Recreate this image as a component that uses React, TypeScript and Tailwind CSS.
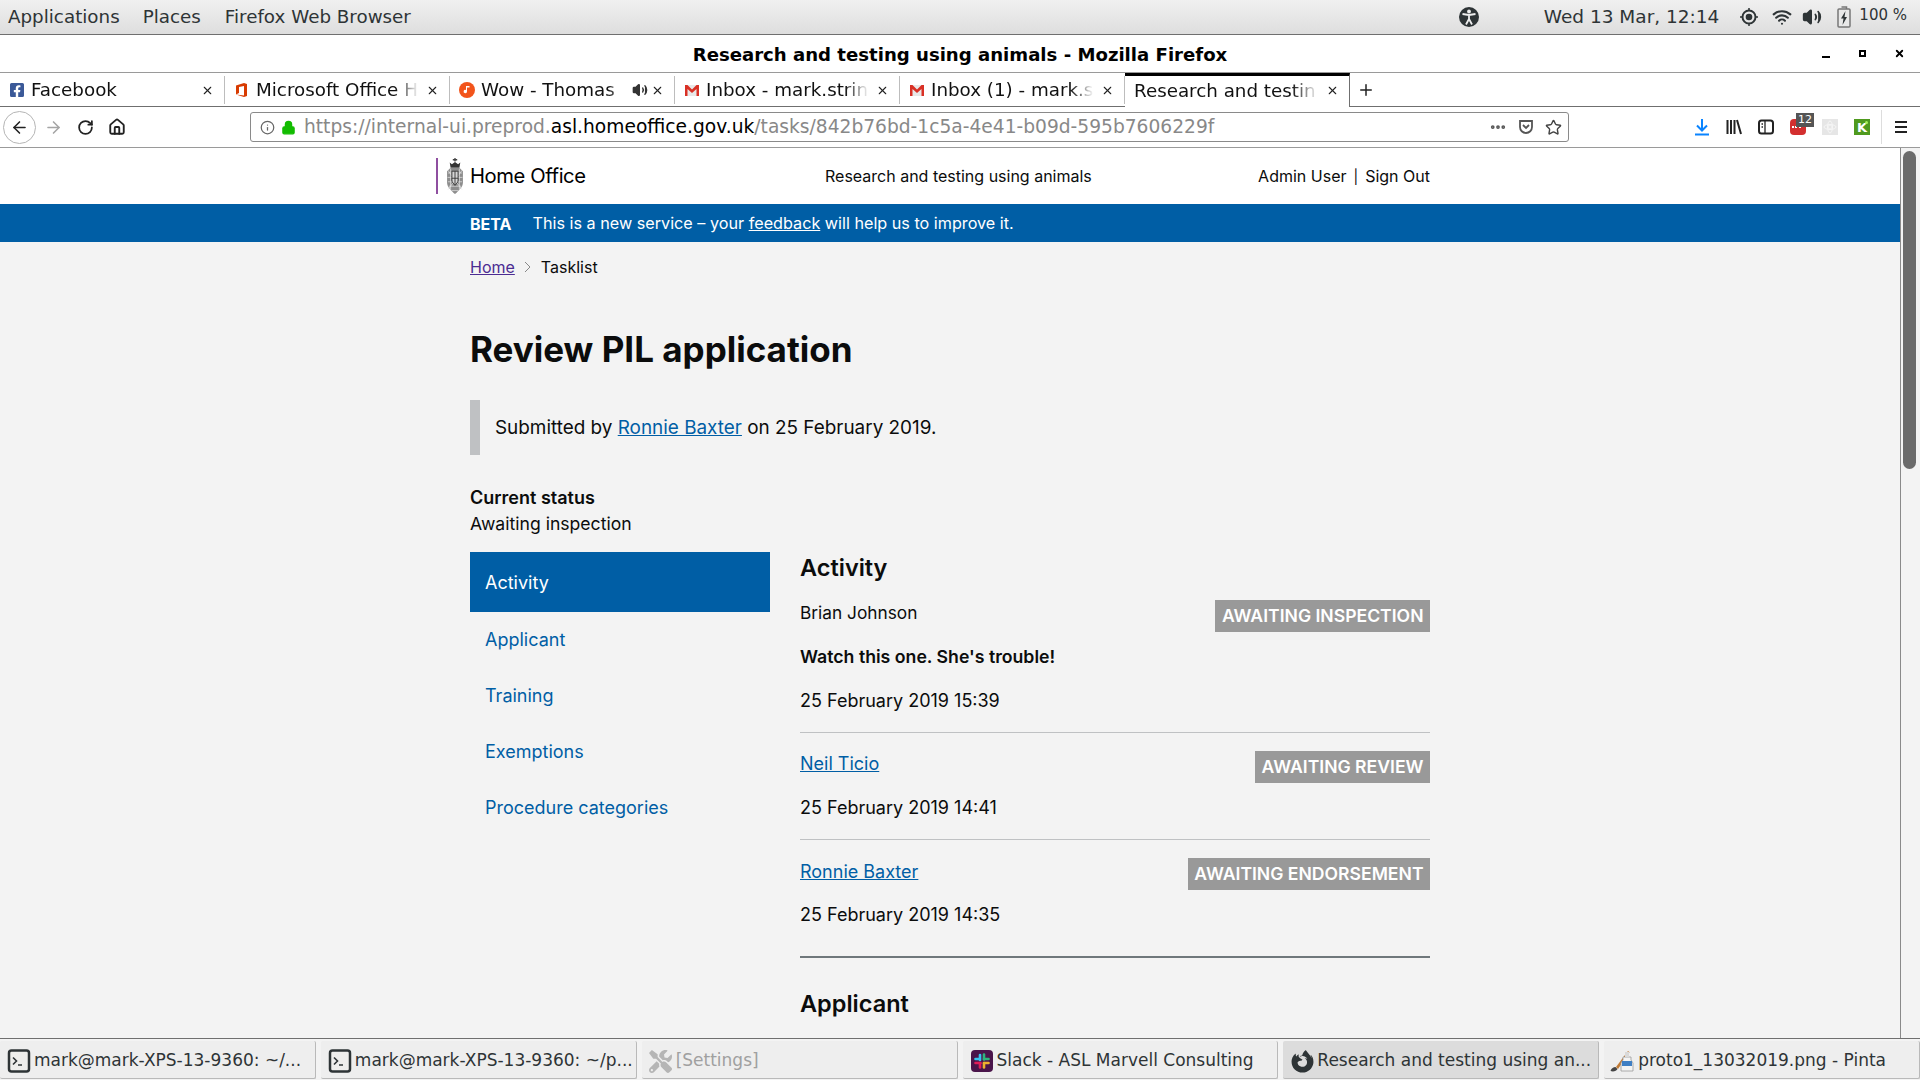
import { ArrowLeft, ArrowRight, Ellipsis, House, Info, Lock, Plus, RotateCw, Star, Volume2, Wifi, X } from 'lucide-react';
import { FaFacebookSquare, FaFirefoxBrowser, FaTools } from 'react-icons/fa';

const tabs = [
    { label: 'Facebook', icon: <FaFacebookSquare className="h-4 w-4 text-[#3b5998]" /> },
    { label: 'Microsoft Office H', icon: <OfficeIcon /> },
    { label: 'Wow - Thomas', icon: <MusicIcon />, audio: true },
    { label: 'Inbox - mark.strin', icon: <GmailIcon /> },
    { label: 'Inbox (1) - mark.s', icon: <GmailIcon /> },
];

const tasks = [
    { label: 'mark@mark-XPS-13-9360: ~/...', icon: <TerminalIcon /> },
    { label: 'mark@mark-XPS-13-9360: ~/p...', icon: <TerminalIcon /> },
    { label: '[Settings]', icon: <FaTools className="h-[23px] w-[23px] text-[#b5b5b5]" />, muted: true },
    { label: 'Slack - ASL Marvell Consulting', icon: <SlackIcon /> },
    { label: 'Research and testing using an...', icon: <FaFirefoxBrowser className="h-[23px] w-[23px] text-[#2e3436]" />, active: true },
    { label: 'proto1_13032019.png - Pinta', icon: <PintaIcon /> },
];

const sideNav = ['Applicant', 'Training', 'Exemptions', 'Procedure categories'];

function OfficeIcon() {
    return (
        <svg viewBox="0 0 16 16" className="h-4 w-4">
            <path d="M2 3.500 10 1l3 1v12l-3 1-8-2.500 8 1V4L5 5v6l-3 1.500z" fill="#d83b01" />
        </svg>
    );
}

function MusicIcon() {
    return (
        <svg viewBox="0 0 16 16" className="h-4 w-4">
            <circle cx="8" cy="8" r="8" fill="#f2541b" />
            <path d="M8 4v5.500a1.700 1.700 0 1 1-1-1.500V4z M8 4h2.500v1.500H8z" fill="#fff" />
        </svg>
    );
}

function GmailIcon() {
    return (
        <svg viewBox="0 0 16 16" className="h-4 w-4">
            <path d="M1 3h14v11H1z" fill="#e8e8e8" />
            <path d="M1 3h2.500L8 7.500 12.500 3H15v11h-2.500V7L8 11 3.500 7v7H1z" fill="#d93025" />
        </svg>
    );
}

function TerminalIcon() {
    return (
        <svg viewBox="0 0 24 24" className="h-6 w-6">
            <rect x="2" y="1.500" width="20" height="21" rx="2.500" fill="#eeeeec" stroke="#2e3436" strokeWidth="2.500" />
            <path d="M6 8.500l3.500 3.500L6 15.500" fill="none" stroke="#2e3436" strokeWidth="1.600" />
            <path d="M11 16h4" stroke="#2e3436" strokeWidth="1.600" />
        </svg>
    );
}

function SlackIcon() {
    return (
        <svg viewBox="0 0 22 22" className="h-[22px] w-[22px]">
            <rect width="22" height="22" rx="4" fill="#4a154b" />
            <path d="M9 5v5" stroke="#36c5f0" strokeWidth="2.600" strokeLinecap="round" />
            <path d="M4.500 9h4" stroke="#36c5f0" strokeWidth="2.600" strokeLinecap="round" />
            <path d="M13 4.500v5" stroke="#2eb67d" strokeWidth="2.600" strokeLinecap="round" />
            <path d="M13 9h4.500" stroke="#2eb67d" strokeWidth="2.600" strokeLinecap="round" />
            <path d="M13 13h4.500" stroke="#ecb22e" strokeWidth="2.600" strokeLinecap="round" />
            <path d="M13 13v4.500" stroke="#ecb22e" strokeWidth="2.600" strokeLinecap="round" />
            <path d="M4.500 13h5" stroke="#e01e5a" strokeWidth="2.600" strokeLinecap="round" />
            <path d="M9 13v4.500" stroke="#e01e5a" strokeWidth="2.600" strokeLinecap="round" />
        </svg>
    );
}

function PintaIcon() {
    return (
        <svg viewBox="0 0 26 24" className="-ml-[2px] h-6 w-[26px] shrink-0">
            <path d="M1.500 22c1-3 3-4 5-4l2 2c-1 2-4 3-7 2z" fill="#444" />
            <path d="M7 18 19 2l1.500 1.200L9 20z" fill="#c07a35" />
            <path d="M14 8h8v3l2 3v8H12v-8l2-3z" fill="#f4f4f4" stroke="#9a9a9a" strokeWidth="0.800" />
            <path d="M16 3h4v5h-4z" fill="#d9d9d9" />
            <path d="M13 12h10v5H13z" fill="#3f7fc4" />
        </svg>
    );
}

function Crest() {
    return (
        <svg viewBox="0 0 20 42" className="h-[37px] w-5">
            <path d="M10 0v4M7.500 2h5" stroke="#444" strokeWidth="1.500" />
            <path d="M4 5l2.500 2L10 4.500 13.500 7 16 5l-1 6H5z" fill="#333" />
            <path d="M5 11h10l4 4v13c0 5-5 9-9 13-4-4-9-8-9-13V15z" fill="#8d8d8d" />
            <path d="M2 17h16M1.500 22h17M2 27h16M3 32h14M6 37h8M5 12v24M15 12v24M2 14l16 22M18 14 2 36" stroke="#e6e6e6" strokeWidth="0.800" />
            <path d="M6.500 15h7v10c0 3-2 4-3.500 6-1.500-2-3.500-3-3.500-6z" fill="#d5d5d5" stroke="#333" strokeWidth="1" />
            <path d="M10 15v16M6.500 23h7" stroke="#333" strokeWidth="1" />
        </svg>
    );
}

function AccessIcon() {
    return (
        <svg viewBox="0 0 20 20" className="h-5 w-5">
            <circle cx="10" cy="10" r="10" fill="#2e3436" />
            <circle cx="10" cy="4.500" r="1.900" fill="#eee" />
            <path d="M3.500 7 10 8l6.500-1M10 8v4M10 12l-3 5.500M10 12l3 5.500" stroke="#eee" strokeWidth="1.800" fill="none" />
        </svg>
    );
}

function LocationIcon() {
    return (
        <svg viewBox="0 0 18 18" className="h-[18px] w-[18px]">
            <circle cx="9" cy="9" r="6.500" fill="none" stroke="#2e3436" strokeWidth="2" />
            <circle cx="9" cy="9" r="3.300" fill="#2e3436" />
            <path d="M9 0v2.500M9 15.500V18M0 9h2.500M15.500 9H18" stroke="#2e3436" strokeWidth="1.500" />
        </svg>
    );
}

function BatteryIcon() {
    return (
        <svg viewBox="0 0 14 22" className="h-[22px] w-[14px]">
            <path d="M4.500 1h5v2" fill="none" stroke="#777" strokeWidth="1.500" />
            <rect x="1" y="3" width="12" height="18" rx="1" fill="#e8e8e8" stroke="#777" strokeWidth="1.500" />
            <path d="M8.500 5 4 12.500h2.500L5.500 19 10 11H7.500z" fill="#2e3436" />
        </svg>
    );
}

function Tab({ label, icon, audio }: { label: string; icon: React.ReactNode; audio?: boolean }) {
    return (
        <div className="flex h-[34px] w-[225px] shrink-0 items-center border-b border-[#6f6f6f] pl-[9px] pt-px">
            <span className="shrink-0">{icon}</span>
            <span className="ml-[6px] min-w-0 flex-1 overflow-hidden whitespace-nowrap text-[18.300px] text-[#111] [mask-image:linear-gradient(to_right,black_84%,transparent_98%)]">
                {label}
            </span>
            {audio && <Volume2 className="h-4 w-4 shrink-0 fill-[#333] text-[#333]" />}
            <X className={`${audio ? 'ml-[3px]' : 'ml-[4px]'} mr-[10px] h-[13px] w-[13px] shrink-0 text-[#222]`} strokeWidth={2} />
            <span className="h-7 w-px shrink-0 bg-[#bdbdbd]" />
        </div>
    );
}

function StatusBadge({ children }: { children: React.ReactNode }) {
    return (
        <span className="flex h-8 items-center whitespace-nowrap bg-[#999999] px-[6.500px] text-[17.600px] font-semibold text-white">
            {children}
        </span>
    );
}

function BrowserChrome() {
    return (
        <header className="shrink-0 font-['DejaVu_Sans',sans-serif]">
            <div className="flex h-[35px] items-center border-b border-[#6f6f6f] bg-gradient-to-b from-[#f0f0f0] to-[#dedede] pl-2 text-[18.300px] text-[#2e3436]">
                <span>Applications</span>
                <span className="ml-[23px]">Places</span>
                <span className="ml-[24px]">Firefox Web Browser</span>
                <span className="ml-auto"><AccessIcon /></span>
                <span className="ml-[65px] whitespace-nowrap text-[18.500px]">Wed 13 Mar, 12:14</span>
                <span className="ml-[21px]"><LocationIcon /></span>
                <Wifi className="ml-[14px] h-[20px] w-[20px]" strokeWidth={2.500} />
                <Volume2 className="ml-[10px] h-[20px] w-[20px] fill-[#2e3436]" strokeWidth={2} />
                <span className="ml-[15px]"><BatteryIcon /></span>
                <span className="mb-[4px] ml-[8px] mr-[13px] whitespace-nowrap text-[15px]">100 %</span>
            </div>
            <div className="relative flex h-[38px] items-center justify-center border-b border-[#9a9a9a] bg-white pt-[2px] text-[18.100px] font-bold text-black">
                Research and testing using animals - Mozilla Firefox
                <div className="absolute right-[15px] top-0 flex h-full items-center gap-[29px]">
                    <span className="mt-[6px] h-[2px] w-2 bg-black" />
                    <span className="h-[7px] w-[7px] border-2 border-black" />
                    <X className="-ml-[1px] h-[11px] w-[11px]" strokeWidth={4} />
                </div>
            </div>
            <div className="flex h-[34px] bg-white">
                {tabs.map((t) => <Tab key={t.label} {...t} />)}
                <div className="flex h-[34px] w-[225px] shrink-0 items-center border-r border-t-[3px] border-r-[#6f6f6f] border-t-black pb-[2px] pl-[9px] pr-[10px]">
                    <span className="min-w-0 flex-1 overflow-hidden whitespace-nowrap text-[18.300px] text-[#111] [mask-image:linear-gradient(to_right,black_84%,transparent_98%)]">Research and testin</span>
                    <X className="ml-[4px] h-[13px] w-[13px] shrink-0 text-[#222]" strokeWidth={2} />
                </div>
                <div className="flex flex-1 items-center border-b border-[#6f6f6f] pl-[7px]">
                    <Plus className="h-[18px] w-[18px] text-[#222]" strokeWidth={2} />
                </div>
            </div>
            <div className="flex h-[41px] items-center border-b border-[#9a9a9a] bg-white">
                <span className="ml-[3px] flex h-[33px] w-[33px] items-center justify-center rounded-full border border-[#b5b5b5]">
                    <ArrowLeft className="h-[19px] w-[19px] text-[#222]" strokeWidth={2} />
                </span>
                <ArrowRight className="ml-[8px] h-[19px] w-[19px] text-[#a5a5a5]" strokeWidth={2} />
                <RotateCw className="ml-[14px] h-[17px] w-[17px] text-[#222]" strokeWidth={2.500} />
                <House className="ml-[14px] h-[18px] w-[18px] text-[#222]" strokeWidth={2.500} />
                <div className="ml-[124px] flex h-[30px] w-[1319px] shrink-0 items-center rounded-[3px] border border-[#8a8a8a] pl-[9px] pr-[6px] text-[18.650px]">
                    <Info className="h-[15px] w-[15px] text-[#666]" />
                    <Lock className="ml-[6px] h-[15px] w-[15px] fill-[#12bc00] text-[#12bc00]" />
                    <span className="ml-[8px] whitespace-nowrap text-[#888]">
                        https://internal-ui.preprod.<span className="text-black">asl.homeoffice.gov.uk</span>/tasks/842b76bd-1c5a-4e41-b09d-595b7606229f
                    </span>
                    <Ellipsis className="ml-auto h-[18px] w-[18px] text-[#555]" strokeWidth={3} />
                    <svg viewBox="0 0 16 16" className="ml-[11px] h-4 w-4 fill-none stroke-[#555] stroke-[1.800]"><path d="M2 2h12v6a6 6 0 0 1-12 0z" /><path d="M5 6l3 3 3-3" /></svg>
                    <Star className="ml-[11px] h-[17px] w-[17px] text-[#444]" strokeWidth={2} />
                </div>
                <div className="ml-[125px] flex shrink-0 items-center gap-4">
                    <svg viewBox="0 0 16 18" className="h-[18px] w-4 fill-none stroke-[#0a84ff] stroke-2">
                        <path d="M8 1v11M3 7.500l5 5 5-5M1 16.500h14" />
                    </svg>
                    <svg viewBox="0 0 16 16" className="h-4 w-4 fill-none stroke-[#222] stroke-2">
                        <path d="M1.500 1v14M5 1v14M8.500 1v14M11 1l4 14" />
                    </svg>
                    <svg viewBox="0 0 16 16" className="h-4 w-4 fill-none stroke-[#222] stroke-2">
                        <rect x="1" y="1.500" width="14" height="13" rx="2.500" />
                        <path d="M7 1.500v13M3.500 5h1.500M3.500 8h1.500" strokeWidth="1.300" />
                    </svg>
                    <span className="relative block h-4 w-4 rounded-sm bg-[#d32f2f]">
                        <span className="absolute left-[2px] top-[7px] h-[2px] w-[9px] border-b-2 border-dotted border-white" />
                        <span className="absolute -right-2 -top-[6px] bg-[#555] px-[2px] text-[11px] leading-[14px] text-white">12</span>
                    </span>
                    <svg viewBox="0 0 16 16" className="h-4 w-4">
                        <rect width="16" height="16" fill="#e6e6e6" />
                        <g fill="none" stroke="#f6f6f6" strokeWidth="1">
                            <ellipse cx="8" cy="8" rx="6" ry="2.500" />
                            <ellipse cx="8" cy="8" rx="2.500" ry="6" />
                            <circle cx="8" cy="8" r="2" />
                        </g>
                    </svg>
                    <span className="relative flex h-4 w-4 items-center justify-center bg-[#4f9a1e] text-[13px] font-bold leading-none text-white">
                        K
                        <span className="absolute right-[2px] top-[2px] h-[3px] w-[3px] rounded-full bg-[#a8f05a]" />
                    </span>
                </div>
                <span className="ml-[11px] h-[34px] w-px shrink-0 bg-[#ddd]" />
                <svg viewBox="0 0 12 14" className="ml-[13px] h-[14px] w-3 shrink-0 stroke-[#222] stroke-2"><path d="M0 2h12M0 7h12M0 12h12" /></svg>
            </div>
        </header>
    );
}

function TaskBar() {
    return (
        <footer className="grid h-[42px] shrink-0 grid-cols-6 gap-[5px] border-t border-[#6f6f6f] bg-[#f3f3f3] pt-[2px] font-['DejaVu_Sans',sans-serif]">
            {tasks.map((t) => (
                <div
                    key={t.label}
                    className={`flex h-[38px] items-center gap-[3px] overflow-hidden whitespace-nowrap rounded-[2px] border-b border-r border-[#b9b9b9] pl-[7px] pt-[3px] text-[17px] ${t.active ? 'bg-[#dcdcdc] text-[#2e3436]' : 'bg-[#eeeeee] text-[#2e3436]'} ${t.muted ? 'text-[#a0a0a0]' : ''}`}
                >
                    <span className="flex h-6 w-6 shrink-0 items-center justify-center">{t.icon}</span>
                    {t.label}
                </div>
            ))}
        </footer>
    );
}

export default function App() {
    return (
        <div className="flex h-screen flex-col overflow-hidden bg-white font-['Inter',sans-serif]">
            <BrowserChrome />
            <div className="flex min-h-0 flex-1">
                <main className="min-w-0 flex-1 overflow-hidden bg-[#f3f3f3] text-[#0b0c0c]">
                    <div className="h-[56px] bg-white">
                        <div className="mx-auto flex h-full w-[960px] items-center text-[16px]">
                            <div className="-ml-[34px] flex h-9 w-[398px] shrink-0 items-center border-l-2 border-[#8f4fa0] pl-[7px]">
                                <Crest />
                                <span className="ml-[5px] text-[20.200px] tracking-[-0.400px] text-black">Home Office</span>
                            </div>
                            <span className="ml-[-9px] whitespace-nowrap">Research and testing using animals</span>
                            <span className="ml-auto whitespace-nowrap">Admin User<span className="mx-[7px] text-[14px]">|</span>Sign Out</span>
                        </div>
                    </div>
                    <div className="h-[38px] bg-[#005ea5] text-white">
                        <div className="mx-auto flex h-full w-[960px] items-center pt-px text-[16.200px]">
                            <strong className="text-[16px] font-bold">BETA</strong>
                            <span className="ml-[21px]">This is a new service – your <a className="underline">feedback</a> will help us to improve it.</span>
                        </div>
                    </div>
                    <div className="mx-auto w-[960px]">
                        <nav className="mt-[13px] flex h-6 items-center text-[16px]">
                            <a className="text-[#4c2c92] underline">Home</a>
                            <svg viewBox="0 0 8 12" className="ml-[9px] h-3 w-2 fill-none stroke-[#888]"><path d="M1 1l5 5-5 5" /></svg>
                            <span className="ml-[9px]">Tasklist</span>
                        </nav>
                        <h1 className="mt-[48px] text-[35px] font-bold leading-[45px]">Review PIL application</h1>
                        <div className="mt-[28px] flex h-[55px] items-center border-l-[10px] border-[#bfc1c3] pl-[15px] pt-[2px] text-[18.900px]">
                            <p>Submitted by <a className="text-[#005ea5] underline">Ronnie Baxter</a> on 25 February 2019.</p>
                        </div>
                        <div className="mt-[30px] text-[18px] leading-[26px]">
                            <p className="font-semibold">Current status</p>
                            <p className="text-[17.600px]">Awaiting inspection</p>
                        </div>
                        <div className="mt-[15px] flex">
                            <ul className="w-[300px] shrink-0 text-[18px]">
                                <li className="-mb-px flex h-[60px] items-center bg-[#005ea5] px-[15px] text-white">Activity</li>
                                {sideNav.map((item) => (
                                    <li key={item} className="flex h-[56px] items-center px-[15px] text-[#005ea5]">{item}</li>
                                ))}
                            </ul>
                            <section className="ml-[30px] min-w-0 flex-1 pt-px text-[18px] leading-6">
                                <h2 className="text-[23.500px] font-semibold leading-[30px]">Activity</h2>
                                <div className="mt-[17px] border-b border-[#bfc1c3] pb-[19px]">
                                    <div className="flex items-start justify-between">
                                        <span className="mt-px text-[17.300px]">Brian Johnson</span>
                                        <StatusBadge>AWAITING INSPECTION</StatusBadge>
                                    </div>
                                    <p className="mt-[13px] text-[17.700px] font-semibold">Watch this one. She's trouble!</p>
                                    <p className="mt-[20px]">25 February 2019 15:39</p>
                                </div>
                                <div className="border-b border-[#bfc1c3] pb-[19px] pt-[18px]">
                                    <div className="flex items-start justify-between">
                                        <a className="mt-px text-[#005ea5] underline">Neil Ticio</a>
                                        <StatusBadge>AWAITING REVIEW</StatusBadge>
                                    </div>
                                    <p className="mt-[13px]">25 February 2019 14:41</p>
                                </div>
                                <div className="border-b-2 border-[#6f777b] pb-[29px] pt-[18px]">
                                    <div className="flex items-start justify-between">
                                        <a className="mt-[2px] text-[#005ea5] underline">Ronnie Baxter</a>
                                        <StatusBadge>AWAITING ENDORSEMENT</StatusBadge>
                                    </div>
                                    <p className="mt-[13px]">25 February 2019 14:35</p>
                                </div>
                                <h2 className="mt-[31px] text-[23.500px] font-semibold leading-[30px]">Applicant</h2>
                            </section>
                        </div>
                    </div>
                </main>
                <div className="w-5 shrink-0 border-l border-[#8a8a8a] bg-[#f3f3f3] pl-[2px] pr-[4px] pt-[3px]">
                    <div className="h-[318px] rounded-full bg-[#6b6b6b]" />
                </div>
            </div>
            <TaskBar />
        </div>
    );
}
